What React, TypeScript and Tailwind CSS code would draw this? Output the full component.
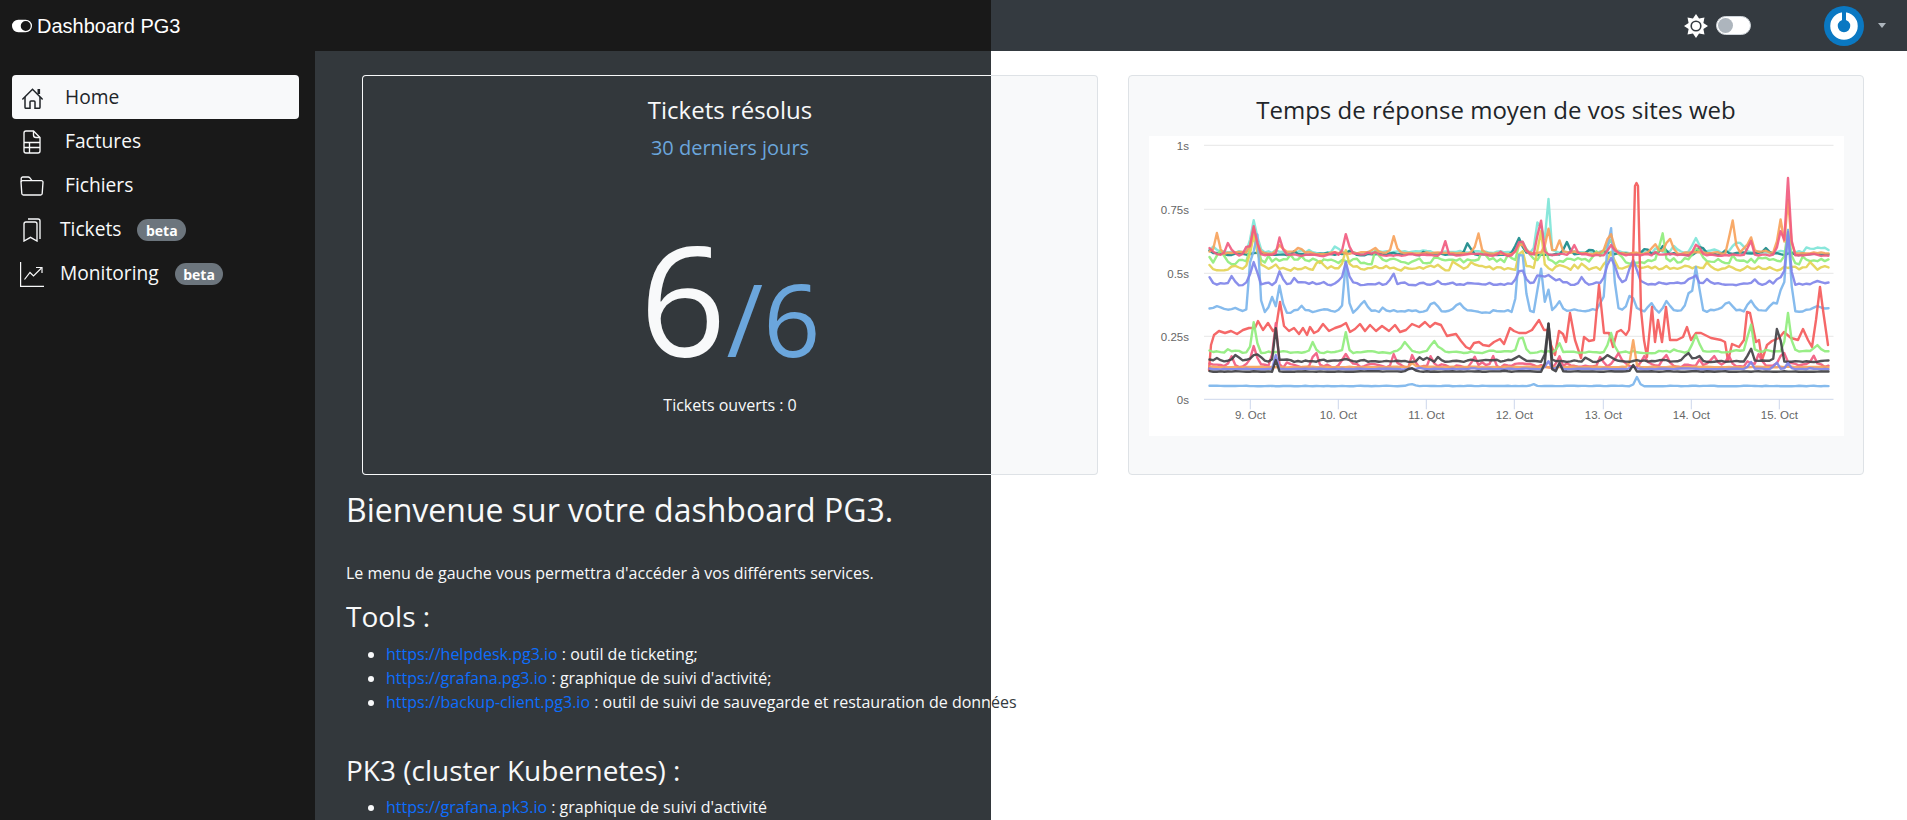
import React from "react";
import { BsToggleOn } from "react-icons/bs";

type Spike = [number, number, number?];
function rng(seed: number) {
  let s = seed;
  return () => {
    s = (s * 16807) % 2147483647;
    return (s - 1) / 2147483646;
  };
}
const X0 = 1208.5;
const X1 = 1827.5;
function gen(seed: number, base: number, amp: number, spikes: Spike[], opts: { bump?: number } = {}) {
  const r = rng(seed);
  const pts: string[] = [];
  const n = 168;
  const ys: number[] = [];
  for (let i = 0; i <= n; i++) {
    let v = (r() - 0.5) * amp;
    if (r() < (opts.bump ?? 0.08)) v -= r() * amp * 1.8;
    ys.push(base + v);
  }
  for (let i = 0; i <= n; i++) {
    const x = X0 + ((X1 - X0) * i) / n;
    let y = (ys[i] + ys[Math.max(0, i - 1)] * 0.4) / 1.4;
    for (const [sx, sy, w = 2.6] of spikes) {
      const g = Math.exp(-((x - sx) * (x - sx)) / (2 * w * w));
      y = Math.min(y, base + (sy - base) * g + (y - base) * (1 - g));
    }
    pts.push(x.toFixed(1) + "," + y.toFixed(1));
  }
  return pts.join(" ");
}
const red = "1208,370 1210,345 1213,335 1218,331 1224,333 1230,331 1236,334 1242,330 1248,328 1254,328 1257,321 1262,330 1267,323 1272,331 1275,328 1279,302 1283,326 1288,331 1293,328 1298,334 1302,328 1306,335 1309,327 1313,333 1317,331 1322,324 1328,331 1334,328 1340,326 1345,323 1349,332 1354,329 1359,324 1364,331 1369,325 1375,331 1381,326 1388,331 1394,325 1399,332 1405,330 1411,324 1418,327 1424,322 1429,327 1434,323 1440,325 1446,336 1450,335 1455,334 1460,341 1465,347 1469,349 1473,343 1478,342 1482,345 1488,346 1493,342 1499,339 1503,344 1509,328 1513,331 1518,333 1525,333 1531,330 1538,320 1543,330 1547,330 1550,345 1554,355 1558,331 1562,334 1565,342 1569,313 1574,340 1580,358 1583,337 1588,341 1593,340 1598,285 1603,333 1608,333 1612,347 1616,332 1620,330 1625,335 1628,330 1631,300 1634,186 1635.5,183 1637,186 1640,310 1643,340 1646,357 1651,307 1654,342 1657,320 1661,342 1665,307 1669,340 1676,340 1682,337 1686,327 1690,340 1695,333 1700,333 1710,338 1720,340 1724,342 1727,361 1731,344 1738,347 1743,340 1746,312 1749,313 1755,342 1758,340 1761,360 1766,345 1771,341 1778,338 1783,332 1790,338 1797,340 1802,329 1807,340 1811,347 1815,320 1819,287 1822,310 1827,345";
const series: { c: string; p: string }[] = [
  { c: "#7fe5d8", p: gen(11, 252, 4, [[1253, 220, 2.8], [1538, 216, 2.5], [1547, 197, 1.8], [1520, 240], [1695, 238, 3], [1737, 242, 5], [1816, 248, 4]]) },
  { c: "#1a8a8a", p: gen(23, 254, 3, [[1467, 243, 2.5], [1518, 238, 3], [1566, 242, 2.5], [1590, 249], [1645, 248], [1662, 246], [1700, 246], [1765, 248]]) },
  { c: "#90ed7d", p: gen(37, 261, 8, [[1253, 232, 3], [1520, 240, 3], [1661, 232, 2.2], [1610, 240, 4], [1696, 248, 3], [1543, 245, 2], [1787, 230, 2]], { bump: 0.15 }) },
  { c: "#e4d354", p: gen(41, 268, 6, [[1253, 236, 3], [1345, 250, 2], [1520, 245, 2], [1610, 252, 3], [1539, 225, 2]], { bump: 0.1 }) },
  { c: "#7cb5ec", p: gen(53, 311, 5, [[1217, 306, 3], [1251, 233, 2], [1256, 233, 2], [1271, 297, 2], [1279, 285, 2], [1345, 262, 1.9], [1363, 301, 3], [1432, 302, 3.5], [1458, 303, 3], [1518, 255, 2.2], [1522, 255, 2.2], [1539, 262, 2], [1547, 289, 2], [1558, 301, 2.3], [1609, 223, 3.2], [1601, 305, 2], [1630, 294, 3], [1650, 303, 2.5], [1665, 301, 2.5], [1687, 294, 2], [1695, 267, 3], [1727, 302, 4], [1749, 300, 2.5], [1771, 301, 2], [1779, 290, 2], [1787, 230, 2.4], [1816, 306, 4]]) },
  { c: "#8085e9", p: gen(67, 284, 4, [[1208, 277, 2], [1231, 276, 2.2], [1253, 262, 3], [1279, 271, 2.4], [1293, 278, 2], [1345, 262, 2.3], [1392, 273, 2], [1520, 269, 3.5], [1538, 274, 3], [1547, 275, 5], [1558, 279, 2], [1581, 277, 2], [1610, 258, 4.5], [1632, 260, 3.5], [1694, 275, 2.8], [1706, 279, 2], [1778, 275, 2], [1787, 232, 2.2], [1816, 281, 4]], { bump: 0.12 }) },
  { c: "#f45b5b", p: red },
  { c: "#90ed7d", p: gen(79, 352, 3, [[1253, 322, 2.2], [1312, 342, 2], [1345, 332, 1.8], [1404, 342, 3], [1433, 341, 3.5], [1520, 335, 3], [1558, 343, 2], [1610, 333, 2.5], [1695, 335, 3], [1749, 320, 2], [1787, 313, 2.3], [1816, 345, 3]]) },
  { c: "#f15c80", p: gen(83, 366, 5, [[1231, 356, 2], [1253, 346, 2.5], [1274, 318, 1.7], [1315, 353, 2.2], [1345, 354, 3], [1393, 354, 2], [1412, 354, 2], [1430, 356, 2], [1473, 356, 2], [1492, 356, 2], [1558, 356, 2], [1600, 356, 2], [1617, 353, 3], [1643, 356], [1665, 355, 3], [1713, 356], [1728, 356], [1758, 354], [1782, 352, 3], [1812, 355, 2]], { bump: 0.12 }) },
  { c: "#f7a35c", p: gen(97, 253, 3, [[1216, 233, 2], [1253, 228, 2.5], [1279, 245], [1297, 248], [1393, 236, 2], [1477, 233, 2], [1520, 243, 3], [1547, 228, 2], [1558, 240, 2], [1609, 233, 3], [1668, 238, 3], [1653, 243, 2], [1731, 219, 2.4], [1749, 235, 2], [1779, 218, 2], [1787, 200, 2]]) },
  { c: "#f7a35c", p: gen(101, 367, 0.8, [[1632, 340, 1.8], [1412, 362, 1.5]], { bump: 0.01 }) },
  { c: "#434348", p: gen(113, 361, 3, [[1216, 358, 1.5], [1235, 355, 3], [1255, 354, 4], [1275, 328, 1.5], [1345, 359, 3], [1427, 357, 1.5], [1437, 357, 1.5], [1518, 356, 3], [1547, 322, 1.7], [1558, 364, 2], [1607, 355, 3], [1687, 353, 3], [1698, 356, 2], [1749, 346, 1.8], [1776, 329, 1.6], [1778, 329, 1.6]], { bump: 0.06 }) },
  { c: "#8085e9", p: gen(127, 369, 1, [[1275, 355, 1.3], [1547, 361, 2], [1558, 364, 1.5], [1632, 366, 2], [1749, 360, 1.6], [1775, 362, 2], [1787, 363, 1.8]], { bump: 0.02 }) },
  { c: "#3f3f42", p: gen(131, 371.5, 0.8, [[1275, 360, 1.2], [1410, 368, 3], [1547, 322, 1.7], [1558, 362, 1.3], [1632, 365, 1.5]], { bump: 0.01 }) },
  { c: "#7cb5ec", p: gen(139, 386, 0.7, [[1410, 384, 3], [1532, 384, 2], [1636, 377, 2]], { bump: 0 }) },
  { c: "#f15c80", p: gen(151, 255, 2.5, [[1208, 248, 3], [1227, 243, 2], [1245, 247, 1.5], [1253, 226, 2.6], [1279, 237, 2], [1345, 234, 2.2], [1444, 241, 1.8], [1520, 240, 3.5], [1539, 216, 2.2], [1573, 245, 2.4], [1610, 245, 3], [1696, 244, 3], [1749, 238, 1.8], [1779, 230, 2], [1787, 178, 2]]) },
];

const grid = [145.3, 209.3, 273.3, 336.3];
const yLabels: [string, number][] = [["1s", 145.3], ["0.75s", 209.3], ["0.5s", 273.3], ["0.25s", 336.3], ["0s", 399.3]];
const ticks: [string, number][] = [["9. Oct", 1249.3], ["10. Oct", 1337.3], ["11. Oct", 1425.3], ["12. Oct", 1513.3], ["13. Oct", 1602.3], ["14. Oct", 1690.3], ["15. Oct", 1778.3]];

function Chart() {
  return (
    <svg viewBox="1148 136 695 300" width={695} height={300} className="block">
      <rect x={1148} y={136} width={695} height={300} fill="#ffffff" />
      {grid.map((y) => (
        <line key={y} x1={1203} x2={1832.5} y1={y} y2={y} stroke="#e6e6e6" strokeWidth={1} />
      ))}
      <line x1={1203} x2={1832.5} y1={399.3} y2={399.3} stroke="#ccd6eb" strokeWidth={1} />
      {ticks.map(([t, x]) => (
        <line key={t} x1={x} x2={x} y1={399.3} y2={409.3} stroke="#ccd6eb" strokeWidth={1} />
      ))}
      {series.map((s, i) => (
        <polyline key={i} points={s.p} fill="none" stroke={s.c} strokeWidth={2.4} strokeOpacity={0.92} strokeLinejoin="round" strokeLinecap="round" />
      ))}
      {yLabels.map(([t, y]) => (
        <text key={t} x={1188} y={y + 5} textAnchor="end" fontSize={11.5} fill="#666666" fontFamily="'Liberation Sans', sans-serif">{t}</text>
      ))}
      {ticks.map(([t, x]) => (
        <text key={t} x={x} y={419} textAnchor="middle" fontSize={11.5} fill="#666666" fontFamily="'Liberation Sans', sans-serif">{t}</text>
      ))}
    </svg>
  );
}

function HomeIcon() {
  return (
    <svg viewBox="0 0 21 21" width={21} height={21} fill="none" stroke="currentColor" strokeWidth={1.5} className="mt-[1px]">
      <path d="M0.8 11 L10.5 1.2 L20.2 11" strokeLinecap="round" />
      <path d="M3 9 V19.3 a1 1 0 0 0 1 1 H8 V14 a1 1 0 0 1 1-1 H12 a1 1 0 0 1 1 1 V20.3 H17 a1 1 0 0 0 1-1 V9" />
      <rect x={15.5} y={1} width={2.6} height={5} fill="currentColor" stroke="none" />
    </svg>
  );
}
function FileIcon() {
  return (
    <svg viewBox="0 0 18 24" width={18} height={24} fill="none" stroke="currentColor" strokeWidth={1.35}>
      <path d="M1 3 a2 2 0 0 1 2-2 H10.5 L17 7.5 V21 a2 2 0 0 1-2 2 H3 a2 2 0 0 1-2-2 Z" />
      <path d="M10.5 1 V5 a2.5 2.5 0 0 0 2.5 2.5 H17" />
      <path d="M1 12.5 H17 M1 17.5 H17 M6.5 12.5 V23" />
    </svg>
  );
}
function FolderIcon() {
  return (
    <svg viewBox="0 0 24 20" width={24} height={20} fill="none" stroke="currentColor" strokeWidth={1.35}>
      <path d="M1 6 L1.8 17.5 a1.6 1.6 0 0 0 1.6 1.5 H20.6 a1.6 1.6 0 0 0 1.6-1.5 L23 6.3 a1.6 1.6 0 0 0-1.6-1.7 H2.6 A1.6 1.6 0 0 0 1 6 Z" />
      <path d="M1.2 6 V2.6 A1.6 1.6 0 0 1 2.8 1 H8.2 a2 2 0 0 1 1.5 .7 L12 4.6" />
    </svg>
  );
}
function BookmarksIcon() {
  return (
    <svg viewBox="0 0 18 24" width={18} height={24} fill="none" stroke="currentColor" strokeWidth={1.35}>
      <path d="M1 6 a2 2 0 0 1 2-2 H12 a2 2 0 0 1 2 2 V23 L7.5 19.3 L1 23 Z" />
      <path d="M5 1 H15 a2 2 0 0 1 2 2 V21" />
    </svg>
  );
}
function GraphIcon() {
  return (
    <svg viewBox="0 0 24 25" width={24} height={25} fill="none" stroke="currentColor" strokeWidth={1.2}>
      <path d="M0.6 0 V24.4 H24" />
      <path d="M4.5 17.5 L10 10.5 L13.5 14 L21.5 6" />
      <path d="M16 5.5 H22 V11" />
    </svg>
  );
}
function SunIcon() {
  const pts: string[] = [];
  for (let i = 0; i < 16; i++) {
    const a = (i * Math.PI) / 8 - Math.PI / 2;
    const r = i % 2 === 0 ? 12 : 8;
    pts.push((12 + r * Math.cos(a)).toFixed(2) + "," + (12 + r * Math.sin(a)).toFixed(2));
  }
  return (
    <svg viewBox="0 0 24 24" width={24} height={24}>
      <polygon points={pts.join(" ")} fill="#ffffff" />
      <circle cx={12} cy={12} r={4.8} fill="#ffffff" stroke="#343a40" strokeWidth={1.6} />
    </svg>
  );
}

function NavItem({ icon, label, active, badge, compact }: { icon: React.ReactNode; label: string; active?: boolean; badge?: boolean; compact?: boolean }) {
  return (
    <div className={"flex h-11 items-center rounded-[4px] " + (active ? "bg-[#f8f9fa] text-[#212529]" : "text-[#f8f9fa]")}>
      <span className="mr-[13px] mt-[2px] flex w-[40px] shrink-0 justify-center">{icon}</span>
      <span className={"-mt-[2px] text-[19.2px] leading-[27px] " + (compact ? "-ml-[5px]" : "")}>{label}</span>
      {badge && <span className="ml-4 mt-[2px] flex h-[22px] items-center rounded-full bg-[#6c757d] px-[8.5px] text-[14px] font-bold text-white">beta</span>}
    </div>
  );
}

export default function App() {
  return (
    <div className="min-h-screen h-[820px] overflow-hidden bg-white font-['Open_Sans',sans-serif] text-[16px] text-[#f8f9fa]">
      <header className="flex h-[51px]">
        <div className="flex w-[991px] items-center bg-[#191919] pl-3">
          <BsToggleOn className="text-[20px] text-white" />
          <span className="ml-[5px] font-['Liberation_Sans',sans-serif] text-[20px] text-white">Dashboard PG3</span>
        </div>
        <div className="flex flex-1 items-center bg-[#343a40]">
          <span className="ml-[693px]"><SunIcon /></span>
          <span className="ml-[8px] flex h-[19px] w-[35px] items-center rounded-full border border-[#ced4da] bg-white pl-[1px]">
            <span className="h-[15px] w-[15px] rounded-full bg-[#adb5bd]" />
          </span>
          <span className="ml-[73px] flex h-10 w-10 items-center justify-center rounded-full bg-[#0a78c2]">
            <svg viewBox="0 0 40 40" width={40} height={40}>
              <circle cx={20} cy={20} r={10} fill="none" stroke="#ffffff" strokeWidth={7.5} />
              <line x1={20} y1={5} x2={20} y2={20} stroke="#0a78c2" strokeWidth={4} strokeLinecap="round" />
            </svg>
          </span>
          <span className="ml-[14px] h-0 w-0 border-x-[4.5px] border-t-[5px] border-x-transparent border-t-[#adb5bd]" />
        </div>
      </header>
      <div className="flex h-[769px]">
        <aside className="w-[315px] shrink-0 bg-[#191919] px-3 pt-6">
          <div className="w-[287px]">
            <NavItem active label="Home" icon={<HomeIcon />} />
            <NavItem label="Factures" icon={<FileIcon />} />
            <NavItem label="Fichiers" icon={<FolderIcon />} />
            <NavItem compact badge label="Tickets" icon={<BookmarksIcon />} />
            <NavItem compact badge label="Monitoring" icon={<GraphIcon />} />
          </div>
        </aside>
        <main className="flex-1 bg-[linear-gradient(to_right,#33383c_676px,#ffffff_676px)] pl-[31px] pr-[29px] pt-6">
          <div className="flex w-[1533px] gap-[30px] pl-[16px] pr-[15px]">
            <section className="h-[400px] w-[736px] rounded-[4px] bg-[linear-gradient(to_right,#f8f9fa_629px,#dee2e6_629px)] p-px">
              <div className="flex h-full flex-col items-center rounded-[3px] bg-[linear-gradient(to_right,#33383c_628px,#f8f9fa_628px)] pt-[16px]">
                <h4 className="text-[24px] leading-[36px] text-[#f8f9fa]">Tickets résolus</h4>
                <p className="mt-[5px] text-[20px] leading-[30px] text-[#6ba6dc]">30 derniers jours</p>
                <div className="mt-[56px] flex h-[160px] items-baseline leading-none">
                  <span className="text-[152px] font-normal leading-[160px] text-[#f8f9fa]">6</span>
                  <span className="text-[100px] leading-[160px] text-[#6ba6dc]">/6</span>
                </div>
                <p className="mt-[14px] text-[16px] leading-[24px] text-[#f8f9fa]">Tickets ouverts : 0</p>
              </div>
            </section>
            <section className="flex h-[400px] w-[736px] flex-col items-center rounded-[4px] border border-[#dee2e6] bg-[#f8f9fa] pt-[16px]">
              <h4 className="text-[24px] leading-[36px] text-[#212529]">Temps de réponse moyen de vos sites web</h4>
              <div className="mt-[8px] w-[695px]">
                <Chart />
              </div>
            </section>
          </div>
          <h2 className="mt-[11px] text-[32px] leading-[48px] text-[#f8f9fa]">Bienvenue sur votre dashboard PG3.</h2>
          <p className="mt-[27px] leading-[24px]">Le menu de gauche vous permettra d'accéder à vos différents services.</p>
          <h3 className="mt-[10px] text-[28px] leading-[42px]">Tools :</h3>
          <ul className="mt-[5px] list-disc pl-10 leading-[24px]">
            <li><a className="text-[#0d6efd]">https://helpdesk.pg3.io</a> : outil de ticketing;</li>
            <li><a className="text-[#0d6efd]">https://grafana.pg3.io</a> : graphique de suivi d'activité;</li>
            <li><a className="text-[#0d6efd]">https://backup-client.pg3.io</a> : outil de suivi de sauvegarde et restauration de donn<span className="text-[#343a40]">ées</span></li>
          </ul>
          <h3 className="mt-[35px] text-[28px] leading-[42px]">PK3 (cluster Kubernetes) :</h3>
          <ul className="mt-[4px] list-disc pl-10 leading-[24px]">
            <li><a className="text-[#0d6efd]">https://grafana.pk3.io</a> : graphique de suivi d'activité</li>
          </ul>
        </main>
      </div>
    </div>
  );
}
